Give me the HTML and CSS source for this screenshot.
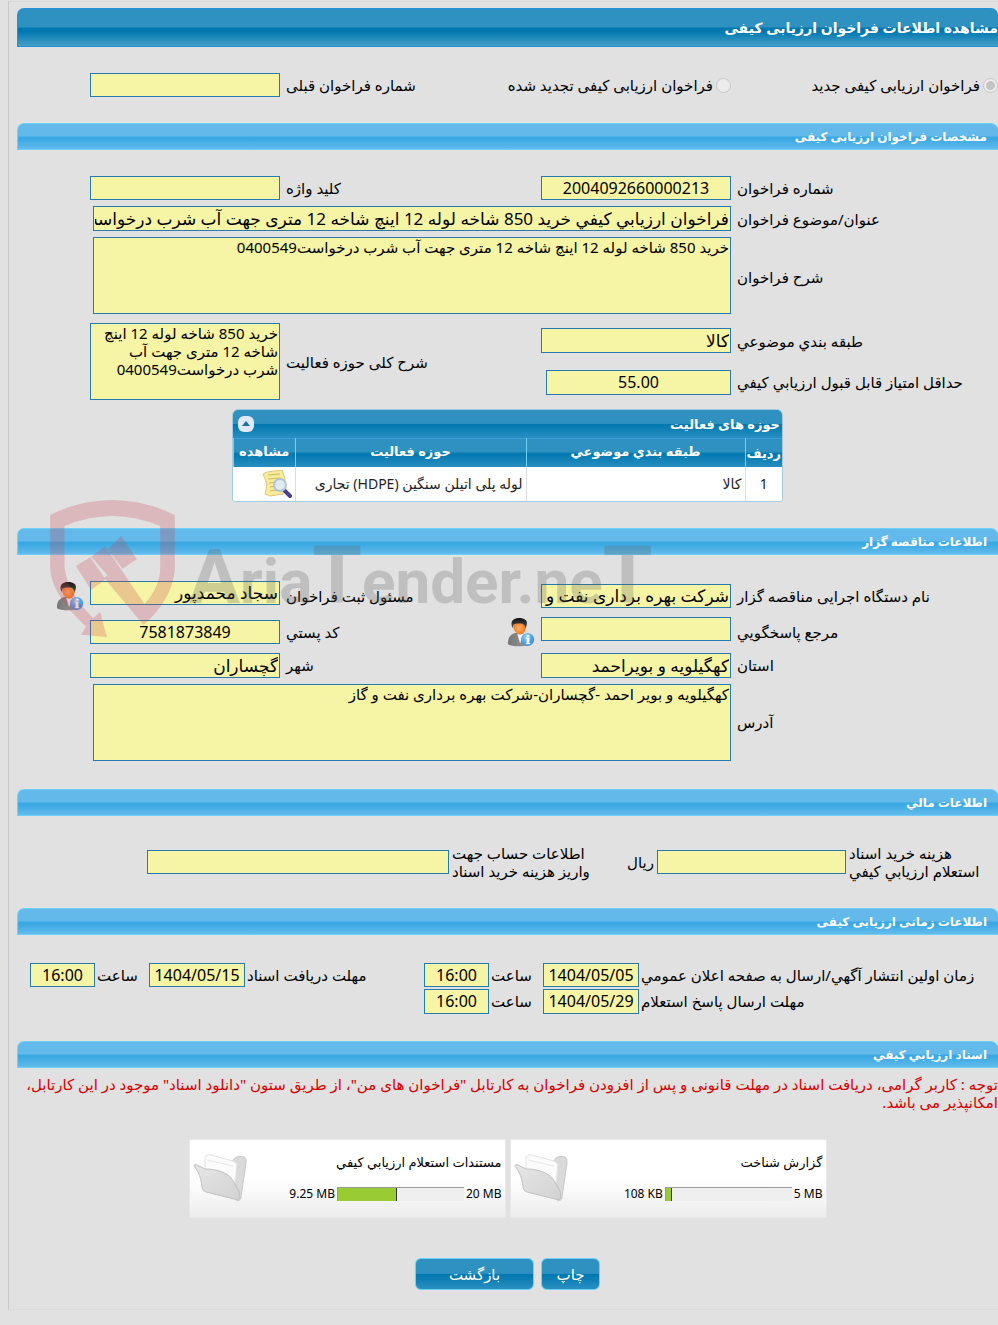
FILE: index.html
```html
<!DOCTYPE html>
<html lang="fa" dir="rtl">
<head>
<meta charset="utf-8">
<meta name="viewport" content="width=device-width, initial-scale=1">
<title>مشاهده اطلاعات فراخوان ارزیابی کیفی</title>
<link rel="stylesheet" href="styles.css">
</head>
<body>
<svg class="defs" aria-hidden="true">
  <defs>
    <linearGradient id="hair" x1="0" y1="0" x2="0" y2="1"><stop offset="0" stop-color="#111"/><stop offset="1" stop-color="#555"/></linearGradient>
    <radialGradient id="face" cx=".45" cy=".5" r=".6"><stop offset="0" stop-color="#ffb060"/><stop offset="1" stop-color="#e8701c"/></radialGradient>
    <linearGradient id="suit" x1="0" y1="0" x2="1" y2="0"><stop offset="0" stop-color="#777"/><stop offset="1" stop-color="#999"/></linearGradient>
    <radialGradient id="info" cx=".4" cy=".3" r=".8"><stop offset="0" stop-color="#8ed0fa"/><stop offset="1" stop-color="#1f7ddb"/></radialGradient>
    <linearGradient id="front" x1="0" y1="0" x2="1" y2="1"><stop offset="0" stop-color="#e6e6e6"/><stop offset="1" stop-color="#d2d2d2"/></linearGradient>
    <symbol id="user" viewBox="0 0 30 32">
      <path d="M1 29c0-6 1-9 7-12h8c5 2 8 5 8 12-5 3-18 3-23 0z" fill="url(#suit)"/>
      <path d="M11 18l3 10 4-10z" fill="#f4f4f4"/>
      <path d="M7 8c0-4 13-4 13 0 1 5-1 10-6 11-5-1-8-6-7-11z" fill="url(#face)"/>
      <path d="M5 9c-1-6 3-8 8-8s10 2 8 8l-1 3c-1-3-2-5-5-5-4 0-6 0-8 1l-1 4z" fill="url(#hair)"/>
      <circle cx="22" cy="24" r="7" fill="url(#info)"/>
      <path d="M21 19h3v2h-3zM20 22h4v6h1v1h-5v-1h1v-5h-1z" fill="#fff"/>
    </symbol>
    <symbol id="folder" viewBox="0 0 54 48">
      <path d="M38 8l4-4c3-2 6-2 9-1 2 1 2 3 2 6l-5 34c0 3-2 4-5 3z" fill="#dadada" stroke="#c8c8c8"/>
      <path d="M12 4c1-3 3-4 6-3l22 6 4 3-3 28-29-22z" fill="#fbfbfb" stroke="#e2e2e2"/>
      <path d="M14 6l26 6" fill="none" stroke="#e8e8e8"/>
      <path d="M1 12c0-1 1-2 3-1l8 4c9 0 16 2 21 5 5 2 8 8 13 17l1 7-2 2-32-8c-3-1-4-3-4-6-1-7-3-14-8-20z" fill="url(#front)" stroke="#c0c0c0"/>
    </symbol>
  </defs>
</svg>
<main class="page">
  <h1 class="title">مشاهده اطلاعات فراخوان ارزیابی کیفی</h1>
  <div class="form type">
    <label class="choice"><input type="radio" name="kind" checked disabled>فراخوان ارزیابی کیفی جدید</label>
    <label class="choice choice-renew"><input type="radio" name="kind" disabled>فراخوان ارزیابی کیفی تجدید شده</label>
    <label class="label label-b" for="prev">شماره فراخوان قبلی</label>
    <input class="field col-b" id="prev" readonly>
  </div>

  <section>
    <h2 class="bar">مشخصات فراخوان ارزیابی کیفی</h2>
    <div class="form specs">
      <label class="label" for="no">شماره فراخوان</label>
      <input class="field num" id="no" value="2004092660000213" readonly>
      <label class="label label-b" for="key">کلید واژه</label>
      <input class="field col-b" id="key" readonly>

      <label class="label" for="subject">عنوان/موضوع فراخوان</label>
      <input class="field tall wide" id="subject" value="فراخوان ارزيابي كيفي خرید 850 شاخه لوله 12 اینچ شاخه 12 متری جهت آب شرب درخواست0400549" readonly>

      <label class="label" for="desc">شرح فراخوان</label>
      <textarea class="field area wide desc" id="desc" readonly>خرید 850 شاخه لوله 12 اینچ شاخه 12 متری جهت آب شرب درخواست0400549</textarea>

      <label class="label" for="cat">طبقه بندي موضوعي</label>
      <input class="field tall" id="cat" value="کالا" readonly>
      <label class="label label-b two-rows" for="scope">شرح کلی حوزه فعالیت</label>
      <textarea class="field area col-b two-rows" id="scope" readonly>خرید 850 شاخه لوله 12 اینچ شاخه 12 متری جهت آب شرب درخواست0400549</textarea>

      <label class="label" for="score">حداقل امتياز قابل قبول ارزيابي كيفي</label>
      <input class="field tall num score" id="score" value="55.00" readonly>
    </div>

    <div class="grid-box">
      <div class="grid-head">
        <h3>حوزه های فعالیت</h3>
        <button type="button" class="fold" aria-label="بستن جدول"><svg viewBox="0 0 16 16"><path d="M4 10h8L8 5z"/></svg></button>
      </div>
      <table class="grid">
        <thead><tr><th class="c-row">ردیف</th><th class="c-cat">طبقه بندي موضوعي</th><th class="c-scope">حوزه فعالیت</th><th>مشاهده</th></tr></thead>
        <tbody><tr><td class="center">1</td><td>کالا</td><td>لوله پلی اتیلن سنگین (HDPE) تجاری</td><td class="view">
          <button type="button" class="icon-btn" aria-label="مشاهده"><svg viewBox="0 0 30 28" width="30" height="28">
            <path d="M1 4L5 2l15-2 3 9-2 15-13 2-5-2 2-10z" fill="#f7eb9c" stroke="#d8c878"/>
            <path d="M6 5l12-1M6 9l13-1M7 13l8-1M8 17l6-1M8 21l6-1" stroke="#d2bb5c"/>
            <path d="M22 20l6 6" stroke="#46408f" stroke-width="4" stroke-linecap="round"/>
            <circle cx="18" cy="15" r="6" fill="#dcebf8" fill-opacity=".9" stroke="#b4c4d8" stroke-width="2"/>
          </svg></button></td></tr></tbody>
      </table>
    </div>
  </section>

  <section class="tender">
    <h2 class="bar">اطلاعات مناقصه گزار</h2>
    <div class="form agency">
      <label class="label" for="org">نام دستگاه اجرایی مناقصه گزار</label>
      <input class="field" id="org" value="شرکت بهره برداری نفت و گاز گچساران" readonly>
      <label class="label label-b" for="officer">مسئول ثبت فراخوان</label>
      <input class="field col-b raised" id="officer" value="سجاد محمدپور" readonly>
      <button type="button" class="icon-btn" aria-label="اطلاعات مسئول"><svg class="user"><use href="#user"/></svg></button>

      <label class="label" for="ref">مرجع پاسخگويي</label>
      <input class="field raised" id="ref" readonly>
      <div class="split">
        <button type="button" class="icon-btn" aria-label="اطلاعات مرجع"><svg class="user"><use href="#user"/></svg></button>
        <label for="zip">کد پستي</label>
      </div>
      <input class="field num col-b" id="zip" value="7581873849" readonly>

      <label class="label" for="state">استان</label>
      <input class="field tall" id="state" value="کهگیلویه و بویراحمد" readonly>
      <label class="label label-b" for="city">شهر</label>
      <input class="field tall col-b" id="city" value="گچساران" readonly>

      <label class="label" for="addr">آدرس</label>
      <textarea class="field area wide" id="addr" readonly>کهگیلویه و بویر احمد -گچساران-شرکت بهره برداری نفت و گاز</textarea>
    </div>
    <div class="watermark" dir="ltr" aria-hidden="true">
      <svg viewBox="60 30 374 411" width="125" height="137">
        <path d="M60 75Q150 30 246 30T434 75V240Q425 330 340 405L222 264 232 256 183 200 225 168 343 342Q390 290 390 235V108Q246 48 103 108V235Q115 315 190 385L210 365 230 441 152 434 168 410Q60 310 60 230Z"/>
        <path d="M137 228L180 202 226 268 183 300ZM233 178L273 138 320 208 277 236Z"/>
      </svg>
      <div class="brand"><span class="cap">A</span>ria<span class="cap-t">T</span>ender.ne<span class="cap-t">T</span></div>
    </div>
  </section>

  <section>
    <h2 class="bar">اطلاعات مالي</h2>
    <div class="money">
      <label class="label" for="cost">هزینه خرید اسناد<br>استعلام ارزيابي كيفي</label>
      <input class="field" id="cost" readonly>
      <span class="label">ریال</span>
      <label class="label" for="account">اطلاعات حساب جهت<br>واریز هزینه خرید اسناد</label>
      <input class="field" id="account" readonly>
    </div>
  </section>

  <section>
    <h2 class="bar">اطلاعات زمانی ارزیابی کیفی</h2>
    <div class="times">
      <label class="label" for="d1">زمان اولين انتشار آگهي/ارسال به صفحه اعلان عمومي</label>
      <input class="field num" id="d1" value="1404/05/05" readonly>
      <label class="label" for="t1">ساعت</label>
      <input class="field num" id="t1" value="16:00" readonly>
      <label class="label" for="d2">مهلت دریافت اسناد</label>
      <input class="field num" id="d2" value="1404/05/15" readonly>
      <label class="label" for="t2">ساعت</label>
      <input class="field num" id="t2" value="16:00" readonly>
      <label class="label first" for="d3">مهلت ارسال پاسخ استعلام</label>
      <input class="field tall num" id="d3" value="1404/05/29" readonly>
      <label class="label" for="t3">ساعت</label>
      <input class="field tall num" id="t3" value="16:00" readonly>
    </div>
  </section>

  <section>
    <h2 class="bar">اسناد ارزيابي كيفي</h2>
    <p class="notice">توجه : کاربر گرامی، دریافت اسناد در مهلت قانونی و پس از افزودن فراخوان به کارتابل "فراخوان های من"، از طریق ستون "دانلود اسناد" موجود در این کارتابل،<br>امکانپذیر می باشد.</p>
    <div class="cards">
      <article class="card">
        <div class="info">
          <span>گزارش شناخت</span>
          <div class="usage"><span dir="ltr">5 MB</span><div class="track" dir="ltr"><div class="fill" style="width:5%"></div></div><span dir="ltr">108 KB</span></div>
        </div>
        <svg class="folder"><use href="#folder"/></svg>
      </article>
      <article class="card">
        <div class="info">
          <span>مستندات استعلام ارزيابي كيفي</span>
          <div class="usage"><span dir="ltr">20 MB</span><div class="track" dir="ltr"><div class="fill" style="width:47%"></div></div><span dir="ltr">9.25 MB</span></div>
        </div>
        <svg class="folder"><use href="#folder"/></svg>
      </article>
    </div>
  </section>
  <div class="actions">
    <button type="button" class="btn">چاپ</button>
    <button type="button" class="btn btn-wide">بازگشت</button>
  </div>
</main>
</body>
</html>
```
FILE: styles.css
```css
* { box-sizing: border-box; }

body {
  margin: 0;
  padding: 1px 0 16px 8px;
  background: #e1e1e1;
  color: #000;
  font: 15px/18px "Noto Sans", "DejaVu Sans", sans-serif;
  overflow-x: hidden;
}

button, input, textarea { font: inherit; }
.defs { position: absolute; width: 0; height: 0; }

.page {
  border: 1px solid #dadada;
  border-left-color: #c8c8c8;
  border-right: 0;
  padding: 6px 0 19px 8px;
}

.title {
  margin: 0;
  height: 39px;
  border: 1px solid #2490dc;
  border-right: 0;
  border-radius: 7px 7px 0 0;
  background: linear-gradient(#2e91bf 0 48%, #0077b0 52%, #0077b0 60%, #459fc6);
  color: #fff;
  font-size: 14px;
  line-height: 37px;
}

.bar {
  margin: 0;
  height: 27px;
  padding: 0 11px;
  border: 1px solid #6fd0f7;
  border-right: 0;
  border-radius: 7px 7px 0 0;
  background: linear-gradient(#63b9ea 0 46%, #3aa9e3 54%, #3aa9e3 60%, #63bbec);
  color: #fff;
  font-size: 12px;
  line-height: 26px;
}

.form {
  display: grid;
  grid-template-columns: 261fr 190px 249fr 190px 67fr;
  gap: 6px;
  align-items: center;
}

.type { padding: 26px 0; }
.specs { padding: 26px 0 9px; }
.agency { padding: 26px 0 28px; }

.label { text-align: left; white-space: nowrap; }
.form .label { grid-column: 1; }
.form .label-b { grid-column: 3; }
.col-b { grid-column: 4; }

.choice { display: flex; align-items: center; gap: 3px; white-space: nowrap; }
.choice-renew { grid-column: 2 / span 2; grid-row: 1; }
.type .label-b, .type .col-b { grid-row: 1; }

.choice input {
  appearance: none;
  width: 15px;
  height: 15px;
  margin: 0;
  border: 1px solid #c8c8c8;
  border-radius: 50%;
  background: #ececec;
}
.choice input:checked { background: radial-gradient(#c4c4c4 4px, #ececec 5px); }

.field {
  width: 100%;
  min-width: 0;
  height: 24px;
  margin: 0;
  padding: 0 1px;
  border: 1px solid #257aae;
  border-radius: 0;
  background: #f6f4a5;
  color: #000;
  font-size: 17px;
  outline: 0;
}
.tall { height: 25px; }
.num { text-align: center; direction: ltr; font-size: 16px; }
.wide { grid-column: 2 / span 3; width: calc(100% - 3px); }
.area { display: block; height: 77px; padding: 0 1px; font-size: 15px; line-height: 18px; resize: none; overflow: hidden; }
.desc { margin-bottom: 3px; }
.two-rows { grid-row: 4 / span 2; }
.score { width: 185px; }
.raised { align-self: start; }

.grid-box {
  width: 551px;
  max-width: 100%;
  margin: 0 auto 26px;
  border: 1px solid #a5cbe2;
  border-radius: 6px 6px 3px 3px;
  overflow: hidden;
}
.grid-head {
  display: flex;
  align-items: center;
  justify-content: space-between;
  height: 28px;
  padding: 0 2px 0 5px;
  background: linear-gradient(#2e91bf 0 48%, #0077b0 52%, #2a8fc0);
  color: #fff;
}
.grid-head h3 { margin: 0; font-size: 13px; }
.fold { width: 16px; height: 16px; padding: 0; border: 0; border-radius: 6px; background: #dfe9f5; }
.fold svg { display: block; fill: #1f6f9f; }

.grid { width: 100%; border-collapse: collapse; table-layout: fixed; background: #fff; color: #222; }
.grid th {
  height: 28px;
  padding: 0 0 4px;
  border-top: 1px solid #3f9fdc;
  border-left: 1px solid #6fd0f7;
  background: linear-gradient(#2e91bf 0 44%, #0077b0 50%, #2a8fc0);
  color: #fff;
  font-size: 13px;
}
.grid td { height: 34px; padding: 0 3px; border-left: 1px solid #ddd; font-size: 14px; }
.grid .center { text-align: center; }
.grid .view { border-left: 0; }
.grid .c-row { width: 37px; padding: 0; }
.c-cat { width: 219px; }
.c-scope { width: 231px; }
.icon-btn { display: block; padding: 0; border: 0; background: none; }
.icon-btn svg { display: block; }
.user { width: 28px; height: 30px; }
.split { display: flex; align-items: center; justify-content: space-between; }

.tender { position: relative; }
.watermark {
  position: absolute;
  left: 33px;
  top: -28px;
  display: flex;
  gap: 14px;
  align-items: flex-end;
  pointer-events: none;
}
.watermark svg { fill: rgba(200, 70, 80, .26); }
.brand {
  padding-bottom: 10px;
  color: rgba(90, 90, 90, .25);
  font: bold 62px/90px Roboto, sans-serif;
}
.cap { font-size: 76px; }
.cap-t { font-size: 80px; }

.money {
  display: grid;
  grid-template-columns: 149fr 189px 25px 174fr 302px 127fr;
  gap: 3px;
  align-items: center;
  padding: 28px 0;
}

.times {
  display: grid;
  grid-template-columns: 357fr 96px 50px 65px 175fr 96px 50px 65px 11fr;
  gap: 2px;
  align-items: center;
  padding: 28px 0 27px;
}
.times .first { grid-column: 1; }

.notice { margin: 0; padding: 7px 0 28px; color: #d80000; white-space: nowrap; }

.cards { display: flex; flex-wrap: wrap; justify-content: center; gap: 4px; }
.card {
  display: flex;
  align-items: center;
  justify-content: space-between;
  width: 317px;
  height: 79px;
  padding: 0 3px;
  border: 1px solid #e8e8e8;
  background: linear-gradient(#fff 50%, #ededed);
  font-size: 13px;
}
.info { display: grid; gap: 14px; }
.usage { display: flex; align-items: center; gap: 2px; font-size: 12px; }
.track { width: 127px; height: 14px; border: 1px solid #999; border-width: 1px 0 0 1px; background: #efefef; }
.fill { height: 100%; background: #9c3; border-right: 1px solid #333; }
.folder { width: 54px; height: 48px; }

.actions { display: flex; justify-content: center; gap: 7px; padding-top: 40px; }
.btn {
  width: 59px;
  height: 32px;
  padding: 0;
  border: 1px solid #6fd0f7;
  border-radius: 6px;
  background: linear-gradient(#2e91bf 0 48%, #0077b0 52%, #2a8fc0);
  color: #fff;
}
.btn-wide { width: 119px; }
```
